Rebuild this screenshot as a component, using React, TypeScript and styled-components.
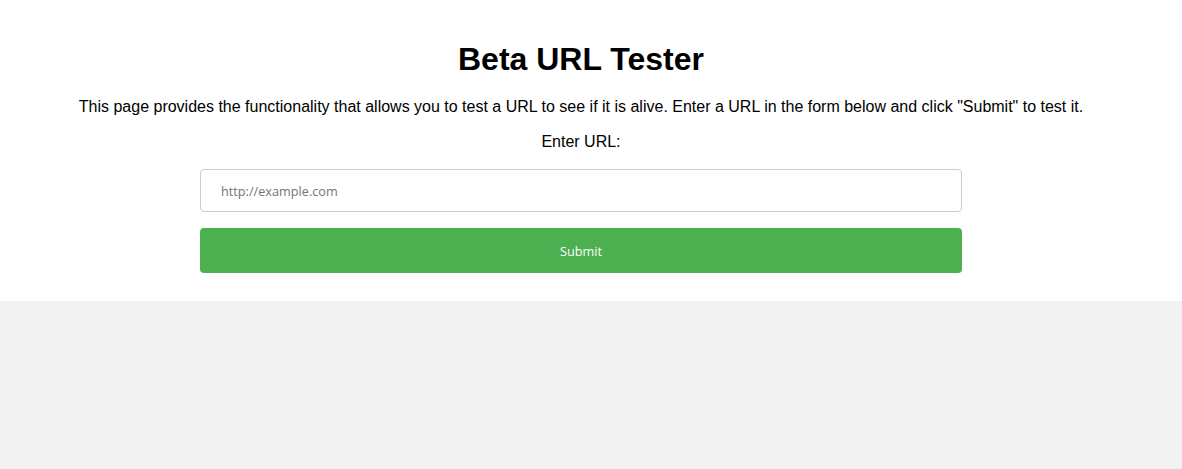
import React from 'react'
import styled, { createGlobalStyle } from 'styled-components'

const GlobalStyle = createGlobalStyle`
  html, body {
    margin: 0;
    padding: 0;
    background-color: #f2f2f2;
    font-family: "Liberation Sans", Arial, sans-serif;
  }
`

const Container = styled.div`
  background-color: #ffffff;
  padding: 41px 40px 28px 20px;
  box-shadow: 0 2px 10px rgba(0, 0, 0, 0.14);
  text-align: center;
`

const Title = styled.h1`
  margin: 0 0 20px;
  font-size: 32px;
  font-weight: 700;
  color: #000;
`

const Description = styled.p`
  margin: 0 0 17px;
  font-size: 16px;
  color: #000;
`

const Form = styled.form`
  display: flex;
  flex-direction: column;
  align-items: center;
`

const Label = styled.label`
  display: block;
  font-size: 16px;
  margin-bottom: 18px;
`

const UrlInput = styled.input`
  box-sizing: border-box;
  width: 762px;
  height: 43px;
  padding: 0 20px;
  border: 1px solid #ccc;
  border-radius: 4px;
  font-family: "Open Sans", sans-serif;
  font-size: 12.7px;
  color: #333;
  margin-bottom: 16px;

  &::placeholder {
    color: #757575;
  }
`

const SubmitButton = styled.button`
  box-sizing: border-box;
  width: 762px;
  height: 45px;
  border: none;
  border-radius: 4px;
  background-color: #4caf50;
  color: #fff;
  font-family: "Open Sans", sans-serif;
  font-size: 12.7px;
  cursor: pointer;
`

const App: React.FC = () => {
  return (
    <>
      <GlobalStyle />
      <Container>
        <Title>Beta URL Tester</Title>
        <Description>
          This page provides the functionality that allows you to test a URL to see if it is alive. Enter a URL in the form below and click "Submit" to test it.
        </Description>
        <Form onSubmit={(e) => e.preventDefault()}>
          <Label htmlFor="url">Enter URL:</Label>
          <UrlInput id="url" type="text" placeholder="http://example.com" />
          <SubmitButton type="submit">Submit</SubmitButton>
        </Form>
      </Container>
    </>
  )
}

export default App
